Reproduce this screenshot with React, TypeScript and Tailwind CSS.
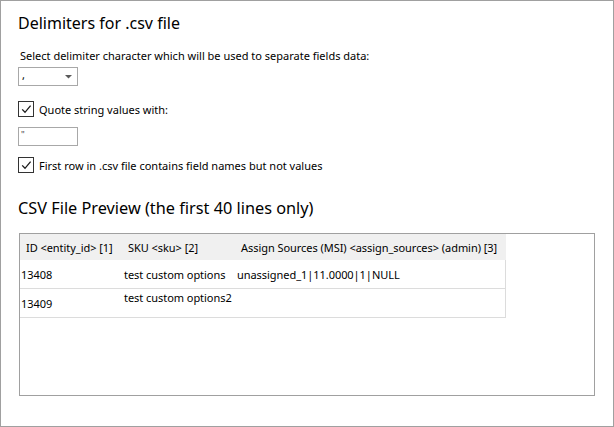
import React from "react";

function Check() {
  return (
    <div className="w-[16px] h-[16px] shrink-0 border border-[#333333] bg-white flex items-center justify-center">
      <svg width="14" height="14" viewBox="0 0 14 14" className="block">
        <path d="M3.2 7.4 L6 10.3 L11.6 3.6" fill="none" stroke="#1a1a1a" strokeWidth="1.3" />
      </svg>
    </div>
  );
}

export default function App() {
  return (
    <div className="w-[614px] h-[427px] border border-[#a0a0a0] bg-white text-black flex flex-col pl-[17px] pr-[18px] overflow-hidden font-['Noto_Sans','Open_Sans',sans-serif]">
      <div className="text-[16px] leading-[22px] h-[22px] mt-[11px] whitespace-nowrap">Delimiters for .csv file</div>
      <div className="text-[11px] leading-[15px] h-[15px] mt-[14px] pl-[2px] whitespace-nowrap">
        Select delimiter character which will be used to separate fields data:
      </div>
      <div className="mt-[4px] w-[60px] h-[19px] shrink-0 border border-[#a8a8a8] flex items-center justify-between pl-[3px] pr-[4px]">
        <span className="text-[11px] leading-[15px] -mt-[4px]">,</span>
        <svg width="8" height="4" viewBox="0 0 8 4" className="block">
          <path d="M0 0 H7 L3.5 3.5 Z" fill="#5a5a5a" />
        </svg>
      </div>
      <div className="mt-[15px] h-[16px] flex items-center gap-[5px]">
        <Check />
        <span className="text-[11px] leading-[15px] whitespace-nowrap">Quote string values with:</span>
      </div>
      <div className="mt-[10px] w-[60px] h-[19px] shrink-0 border border-[#a8a8a8] flex items-start pl-[2px]">
        <span className="text-[9px] leading-[12px] text-[#444444] mt-[1px]">"</span>
      </div>
      <div className="mt-[11px] h-[16px] flex items-center gap-[5px]">
        <Check />
        <span className="text-[11px] leading-[15px] whitespace-nowrap">First row in .csv file contains field names but not values</span>
      </div>
      <div className="text-[16.3px] leading-[22px] h-[22px] mt-[24px] whitespace-nowrap">CSV File Preview (the first 40 lines only)</div>
      <div className="mt-[14px] ml-[1px] h-[163px] shrink-0 border border-[#a0a0a0] flex flex-col items-start">
        <div className="w-[486px] text-[11px] leading-[15px] whitespace-nowrap tracking-[-0.05px]">
          <div className="flex h-[26px] items-center bg-[#f0f0f0]">
            <div className="w-[103px] pl-[6px]">ID &lt;entity_id&gt; [1]</div>
            <div className="w-[113px] pl-[5px]">SKU &lt;sku&gt; [2]</div>
            <div className="flex-1 pl-[5px]">Assign Sources (MSI) &lt;assign_sources&gt; (admin) [3]</div>
          </div>
          <div className="flex h-[29px] items-center border-b border-r border-[#dcdcdc]">
            <div className="w-[103px] pl-[1px]">13408</div>
            <div className="w-[113px] pl-[1px]">test custom options</div>
            <div className="flex-1 pl-[1px]">unassigned_1|11.0000|1|NULL</div>
          </div>
          <div className="flex h-[29px] border-b border-r border-[#dcdcdc]">
            <div className="w-[103px] pl-[1px] self-center">13409</div>
            <div className="w-[113px] pl-[1px] pt-[1px]">test custom options2</div>
            <div className="flex-1" />
          </div>
        </div>
      </div>
    </div>
  );
}
